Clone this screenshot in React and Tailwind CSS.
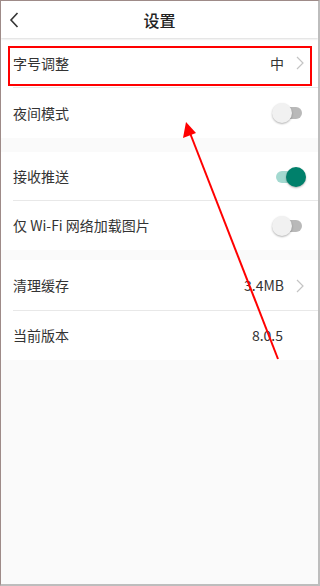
import React from 'react'

const font = { fontFamily: '"Noto Sans CJK SC", "Noto Sans", Roboto, sans-serif' }

function Chevron() {
  return (
    <svg width="8" height="14" viewBox="0 0 8 14" className="ml-3">
      <path d="M1 1l6 6-6 6" fill="none" stroke="#c4c4c4" strokeWidth="1.2" />
    </svg>
  )
}

function Toggle({ on }) {
  return (
    <div className="relative w-[30px] h-[20px] flex items-center">
      <div className={`w-[26px] h-[12px] rounded-full ml-[2px] ${on ? 'bg-[#a3d9d0]' : 'bg-[#b9b9b9]'}`} />
      <div className={`absolute top-0 w-[20px] h-[20px] rounded-full shadow-[0_1px_2px_rgba(0,0,0,0.3)] ${on ? 'right-[-2px] bg-[#00806b]' : 'left-[-2px] bg-[#f1f1f1]'}`} />
    </div>
  )
}

function Row({ label, right, divider, h }) {
  return (
    <div className={`relative flex items-center ${h} pl-3 pr-[14px] bg-white`}>
      <span className="text-[14px] text-[#333]">{label}</span>
      <div className="ml-auto flex items-center text-[14px] text-[#333]">{right}</div>
      {divider && <div className="absolute bottom-0 left-3 right-0 h-px bg-[#e8e8e8]" />}
    </div>
  )
}

export default function App() {
  return (
    <div style={font} className="relative w-[320px] h-[586px] bg-[#fafafa] border-t border-l border-[#9e8b88] border-r-2 border-r-[#bdbdbd] border-b-2 border-b-[#bdbdbd] overflow-hidden">
      <div className="relative h-[37px] flex items-center justify-center bg-white shadow-[0_1px_2px_rgba(0,0,0,0.15)] z-10">
        <svg width="10" height="16" viewBox="0 0 10 16" className="absolute left-[8px] top-[11px]">
          <path d="M8.5 1L2 8l6.5 7" fill="none" stroke="#333" strokeWidth="1.6" />
        </svg>
        <span className="text-[16px] text-[#222] font-medium">设置</span>
      </div>
      <div>
        <Row h="h-[50px]" label="字号调整" right={<><span>中</span><Chevron /></>} divider />
        <Row h="h-[50px]" label="夜间模式" right={<Toggle on={false} />} />
      </div>
      <div className="mt-[14px]">
        <Row h="h-[49px]" label="接收推送" right={<Toggle on />} divider />
        <Row h="h-[49px]" label="仅 Wi-Fi 网络加载图片" right={<Toggle on={false} />} />
      </div>
      <div className="mt-[10px]">
        <Row h="h-[51px]" label="清理缓存" right={<><span>3.4MB</span><Chevron /></>} divider />
        <Row h="h-[49px]" label="当前版本" right={<span className="mr-[21px]">8.0.5</span>} />
      </div>
      <div className="absolute left-[7px] top-[45px] w-[304px] h-[40px] border-2 border-[#f00] pointer-events-none" />
      <svg className="absolute left-0 top-0 pointer-events-none" width="320" height="586">
        <line x1="277" y1="358" x2="189" y2="132" stroke="#f00" strokeWidth="2" />
        <polygon points="185,121 182,137 195,132" fill="#f00" />
      </svg>
    </div>
  )
}
